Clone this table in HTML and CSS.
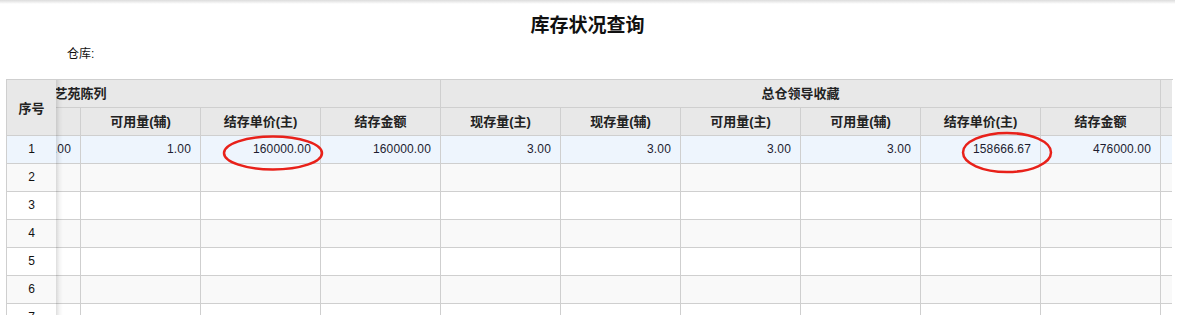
FILE: index.html
```html
<!DOCTYPE html>
<html lang="zh-CN">
<head>
<meta charset="utf-8">
<title>库存状况查询</title>
<link rel="stylesheet" href="styles.css">
</head>
<body>
<div class="page">
  <div class="topbar"></div>
  <h1 class="title">库存状况查询</h1>
  <div class="filter">仓库:</div>
  <div class="grid">
    <div class="frozen">
      <div class="fh">序号</div>
      <div class="fc sel">1</div>
      <div class="fc alt">2</div>
      <div class="fc">3</div>
      <div class="fc alt">4</div>
      <div class="fc">5</div>
      <div class="fc alt">6</div>
      <div class="fc">7</div>
      <div class="fc alt">8</div>
    </div>
    <div class="scroll">
      <div class="sheet">
        <div class="row head">
          <div class="g">艺苑陈列</div>
          <div class="g">总仓领导收藏</div>
          <div class="g">办公室库</div>
        </div>
        <div class="row head">
          <div>现存量(主)</div><div>现存量(辅)</div><div>可用量(主)</div><div>可用量(辅)</div><div>结存单价(主)</div><div>结存金额</div>
          <div>现存量(主)</div><div>现存量(辅)</div><div>可用量(主)</div><div>可用量(辅)</div><div>结存单价(主)</div><div>结存金额</div>
          <div>现存量(主)</div><div>现存量(辅)</div><div>可用量(主)</div><div>可用量(辅)</div><div>结存单价(主)</div><div>结存金额</div>
        </div>
        <div class="row data sel">
          <div>1.00</div><div>1.00</div><div>1.00</div><div>1.00</div><div>160000.00</div><div>160000.00</div>
          <div>3.00</div><div>3.00</div><div>3.00</div><div>3.00</div><div>158666.67</div><div>476000.00</div>
          <div></div><div></div><div></div><div></div><div></div><div></div>
        </div>
        <div class="row data alt">
          <div></div><div></div><div></div><div></div><div></div><div></div>
          <div></div><div></div><div></div><div></div><div></div><div></div>
          <div></div><div></div><div></div><div></div><div></div><div></div>
        </div>
        <div class="row data">
          <div></div><div></div><div></div><div></div><div></div><div></div>
          <div></div><div></div><div></div><div></div><div></div><div></div>
          <div></div><div></div><div></div><div></div><div></div><div></div>
        </div>
        <div class="row data alt">
          <div></div><div></div><div></div><div></div><div></div><div></div>
          <div></div><div></div><div></div><div></div><div></div><div></div>
          <div></div><div></div><div></div><div></div><div></div><div></div>
        </div>
        <div class="row data">
          <div></div><div></div><div></div><div></div><div></div><div></div>
          <div></div><div></div><div></div><div></div><div></div><div></div>
          <div></div><div></div><div></div><div></div><div></div><div></div>
        </div>
        <div class="row data alt">
          <div></div><div></div><div></div><div></div><div></div><div></div>
          <div></div><div></div><div></div><div></div><div></div><div></div>
          <div></div><div></div><div></div><div></div><div></div><div></div>
        </div>
        <div class="row data">
          <div></div><div></div><div></div><div></div><div></div><div></div>
          <div></div><div></div><div></div><div></div><div></div><div></div>
          <div></div><div></div><div></div><div></div><div></div><div></div>
        </div>
        <div class="row data alt">
          <div></div><div></div><div></div><div></div><div></div><div></div>
          <div></div><div></div><div></div><div></div><div></div><div></div>
          <div></div><div></div><div></div><div></div><div></div><div></div>
        </div>
      </div>
    </div>
  </div>
</div>
<svg class="marks" width="1192" height="315" viewBox="0 0 1192 315">
  <ellipse cx="273" cy="153" rx="49" ry="16.5" />
  <ellipse cx="1007" cy="152.5" rx="44" ry="19.5" />
</svg>
</body>
</html>
```
FILE: styles.css
```css
html, body {
  margin: 0;
  padding: 0;
  overflow: hidden;
  background: #fff;
}
body {
  font-family: "Liberation Sans", Arial, "Noto Sans CJK SC", sans-serif;
  font-size: 12px;
  color: #222;
}
.page {
  width: 1175px;
}
.topbar {
  height: 4px;
  background: linear-gradient(#dcdcdc, #ffffff);
}
.title {
  margin: 8px 0 0;
  text-align: center;
  font-family: "Noto Sans CJK SC", sans-serif;
  font-size: 19px;
  line-height: 24px;
  font-weight: bold;
  color: #111;
}
.filter {
  margin-top: 10px;
  padding-left: 67px;
  line-height: 16px;
  font-family: "Liberation Sans", "Noto Sans CJK SC", sans-serif;
  color: #111;
}
.grid {
  margin: 17px 0 0 6px;
  width: 1166px;
  display: flex;
  border-top: 1px solid #cfcfcf;
  border-left: 1px solid #cfcfcf;
}
.frozen {
  width: 49px;
  flex: none;
  position: relative;
  z-index: 2;
}
.frozen::after {
  content: "";
  position: absolute;
  top: 0;
  bottom: 0;
  right: -7px;
  width: 7px;
  background: linear-gradient(to right, rgba(0,0,0,0.13), rgba(0,0,0,0.04) 50%, rgba(0,0,0,0));
}
.fh {
  height: 56px;
  box-sizing: border-box;
  border-bottom: 1px solid #cfcfcf;
  background: #e8e8e8;
  display: flex;
  align-items: center;
  justify-content: center;
  font-weight: bold;
  font-size: 13px;
  font-family: "Noto Sans CJK SC", sans-serif;
  color: #222;
}
.fc {
  height: 28px;
  box-sizing: border-box;
  border-bottom: 1px solid #cfcfcf;
  line-height: 27px;
  text-align: center;
  background: #fff;
  color: #111;
}
.fc.alt { background: #f9f9f9; }
.fc.sel { background: #eef5fd; }
.scroll {
  width: 1116px;
  flex: none;
  overflow: hidden;
}
.sheet {
  display: grid;
  grid-template-columns: repeat(18, 120px);
  grid-auto-rows: 28px;
  width: 2160px;
  margin-left: -335px;
}
.row {
  display: contents;
}
.row > div {
  box-sizing: border-box;
  border-right: 1px solid #cfcfcf;
  border-bottom: 1px solid #cfcfcf;
  line-height: 27px;
  white-space: nowrap;
  overflow: hidden;
  background: #fff;
}
.head > div {
  background: #e8e8e8;
  text-align: center;
  font-weight: bold;
  font-size: 13px;
  font-family: "Liberation Sans", "Noto Sans CJK SC", sans-serif;
  color: #222;
}
.head > .g {
  grid-column: span 6;
}
.data > div {
  text-align: right;
  padding-right: 9px;
  color: #1c1c30;
  letter-spacing: 0.15px;
}
.data.alt > div { background: #f9f9f9; }
.data.sel > div { background: #eef5fd; }
.marks {
  position: absolute;
  left: 0;
  top: 0;
  pointer-events: none;
}
.marks ellipse {
  fill: none;
  stroke: #e8211a;
  stroke-width: 2.5;
}
```
